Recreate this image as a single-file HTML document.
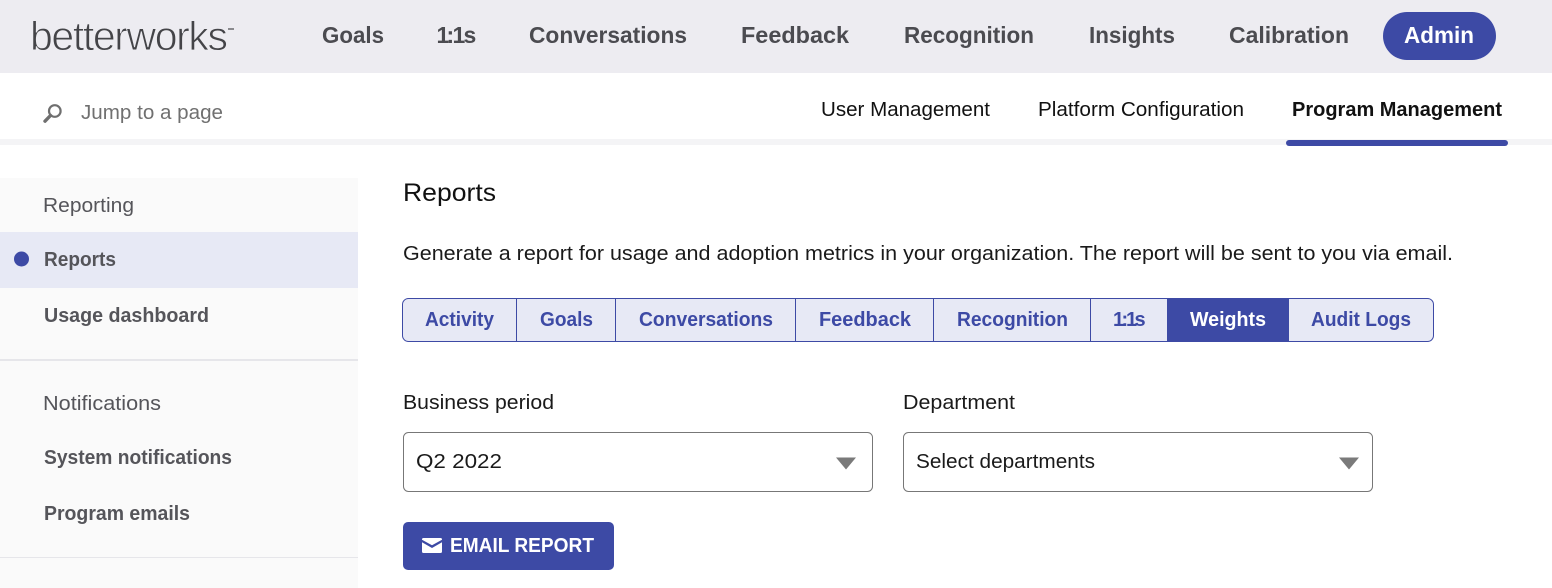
<!DOCTYPE html>
<html lang="en">
<head>
<meta charset="utf-8">
<title>Reports</title>
<style>
html,body{margin:0;padding:0;background:#fff;width:1552px;height:588px;overflow:hidden}
svg{display:block}
text{font-family:"Liberation Sans",sans-serif}
.n{font-size:23px;font-weight:700;fill:#4b4b50}
.s{font-size:20px;fill:#111}
.l{font-size:20px;fill:#55555a}
.b{font-size:20px;font-weight:700;fill:#55555a}
.t{font-size:20px;font-weight:700;fill:#3d4aa5}
.m{font-size:20px;fill:#1a1a1a}
</style>
</head>
<body>
<svg width="1552" height="588" viewBox="0 0 1552 588" xmlns="http://www.w3.org/2000/svg">
<rect width="1552" height="73" fill="#edecf1"/>
<text x="30" y="50" font-size="41" textLength="198" lengthAdjust="spacing" fill="#444448" stroke="#edecf1" stroke-width="0.9">betterworks</text>
<rect x="228" y="28" width="6" height="2" fill="#8a8a8e"/>
<text class="n" x="322" y="43" textLength="62" lengthAdjust="spacingAndGlyphs">Goals</text>
<text class="n" x="436.500 446.500 452.500 463.500" y="43">1:1s</text>
<text class="n" x="529" y="43" textLength="158" lengthAdjust="spacingAndGlyphs">Conversations</text>
<text class="n" x="741" y="43" textLength="108" lengthAdjust="spacingAndGlyphs">Feedback</text>
<text class="n" x="904" y="43" textLength="130" lengthAdjust="spacingAndGlyphs">Recognition</text>
<text class="n" x="1089" y="43" textLength="86" lengthAdjust="spacingAndGlyphs">Insights</text>
<text class="n" x="1229" y="43" textLength="120" lengthAdjust="spacingAndGlyphs">Calibration</text>
<rect x="1383" y="12" width="113" height="48" rx="24" fill="#3d4aa5"/>
<text x="1404" y="43" font-size="23" font-weight="700" fill="#fff" textLength="70" lengthAdjust="spacingAndGlyphs">Admin</text>

<rect y="139" width="1552" height="6" fill="#f4f4f6"/>
<g fill="none" stroke="#6f6f6f" stroke-width="2.2">
<circle cx="54.800" cy="111" r="5.800"/>
<path d="M50.500 115.500L45 121.200" stroke-width="3.400" stroke-linecap="round"/>
</g>
<text x="81" y="119" font-size="20" fill="#707070" textLength="142" lengthAdjust="spacingAndGlyphs">Jump to a page</text>
<text class="s" x="821" y="116" textLength="169" lengthAdjust="spacingAndGlyphs">User Management</text>
<text class="s" x="1038" y="116" textLength="206" lengthAdjust="spacingAndGlyphs">Platform Configuration</text>
<text class="s" x="1292" y="116" font-weight="700" textLength="210" lengthAdjust="spacingAndGlyphs">Program Management</text>
<rect x="1286" y="140" width="222" height="6" rx="3" fill="#3d4aa5"/>

<rect y="178" width="358" height="410" fill="#fafafa"/>
<rect y="232" width="358" height="56" fill="#e7e9f5"/>
<circle cx="21.500" cy="259" r="7.500" fill="#3d4aa5"/>
<rect y="359" width="358" height="2" fill="#e6e6ea"/>
<rect y="557" width="358" height="1" fill="#e6e6ea"/>
<text class="l" x="43" y="212" textLength="91" lengthAdjust="spacingAndGlyphs">Reporting</text>
<text class="b" x="44" y="266" textLength="72" lengthAdjust="spacingAndGlyphs">Reports</text>
<text class="b" x="44" y="322" textLength="165" lengthAdjust="spacingAndGlyphs">Usage dashboard</text>
<text class="l" x="43" y="410" textLength="118" lengthAdjust="spacingAndGlyphs">Notifications</text>
<text class="b" x="44" y="464" textLength="188" lengthAdjust="spacingAndGlyphs">System notifications</text>
<text class="b" x="44" y="520" textLength="146" lengthAdjust="spacingAndGlyphs">Program emails</text>

<text x="403" y="201" font-size="25" fill="#111" textLength="93" lengthAdjust="spacingAndGlyphs">Reports</text>
<text class="m" x="403" y="260" textLength="1050" lengthAdjust="spacingAndGlyphs">Generate a report for usage and adoption metrics in your organization. The report will be sent to you via email.</text>

<rect x="402.500" y="298.500" width="1031" height="43" rx="6" fill="#e7e9f5" stroke="#3d4aa5"/>
<rect x="1167" y="298" width="122" height="44" fill="#3d4aa5"/>
<g fill="#3d4aa5">
<rect x="516" y="298" width="1" height="44"/>
<rect x="615" y="298" width="1" height="44"/>
<rect x="795" y="298" width="1" height="44"/>
<rect x="933" y="298" width="1" height="44"/>
<rect x="1090" y="298" width="1" height="44"/>
</g>
<text class="t" x="425" y="326" textLength="69" lengthAdjust="spacingAndGlyphs">Activity</text>
<text class="t" x="540" y="326" textLength="53" lengthAdjust="spacingAndGlyphs">Goals</text>
<text class="t" x="639" y="326" textLength="134" lengthAdjust="spacingAndGlyphs">Conversations</text>
<text class="t" x="819" y="326" textLength="92" lengthAdjust="spacingAndGlyphs">Feedback</text>
<text class="t" x="957" y="326" textLength="111" lengthAdjust="spacingAndGlyphs">Recognition</text>
<text class="t" x="1113 1121.500 1126 1134.500" y="326">1:1s</text>
<text x="1190" y="326" font-size="20" font-weight="700" fill="#fff" textLength="76" lengthAdjust="spacingAndGlyphs">Weights</text>
<text class="t" x="1311" y="326" textLength="100" lengthAdjust="spacingAndGlyphs">Audit Logs</text>

<text class="m" x="403" y="409" textLength="151" lengthAdjust="spacingAndGlyphs">Business period</text>
<text class="m" x="903" y="409" textLength="112" lengthAdjust="spacingAndGlyphs">Department</text>

<rect x="403.500" y="432.500" width="469" height="59" rx="5" fill="#fff" stroke="#777"/>
<rect x="903.500" y="432.500" width="469" height="59" rx="5" fill="#fff" stroke="#777"/>
<text class="m" x="416" y="468" textLength="86" lengthAdjust="spacingAndGlyphs">Q2 2022</text>
<text class="m" x="916" y="468" textLength="179" lengthAdjust="spacingAndGlyphs">Select departments</text>
<path d="M836 457.500H856L846 469.500Z" fill="#7a7a7a"/>
<path d="M1339 457.500H1359L1349 469.500Z" fill="#7a7a7a"/>

<rect x="403" y="522" width="211" height="48" rx="5" fill="#3d4aa5"/>
<path d="M423.500 538H440.500A1.500 1.500 0 0 1 442 539.500V539.800L432 545.200L422 539.800V539.500A1.500 1.500 0 0 1 423.500 538Z" fill="#fff"/>
<path d="M422 542.300L432 548L442 542.300V551.500A1.500 1.500 0 0 1 440.500 553H423.500A1.500 1.500 0 0 1 422 551.500Z" fill="#fff"/>
<text x="450" y="552" font-size="20" font-weight="700" fill="#fff" textLength="144" lengthAdjust="spacingAndGlyphs">EMAIL REPORT</text>
</svg>
</body>
</html>
